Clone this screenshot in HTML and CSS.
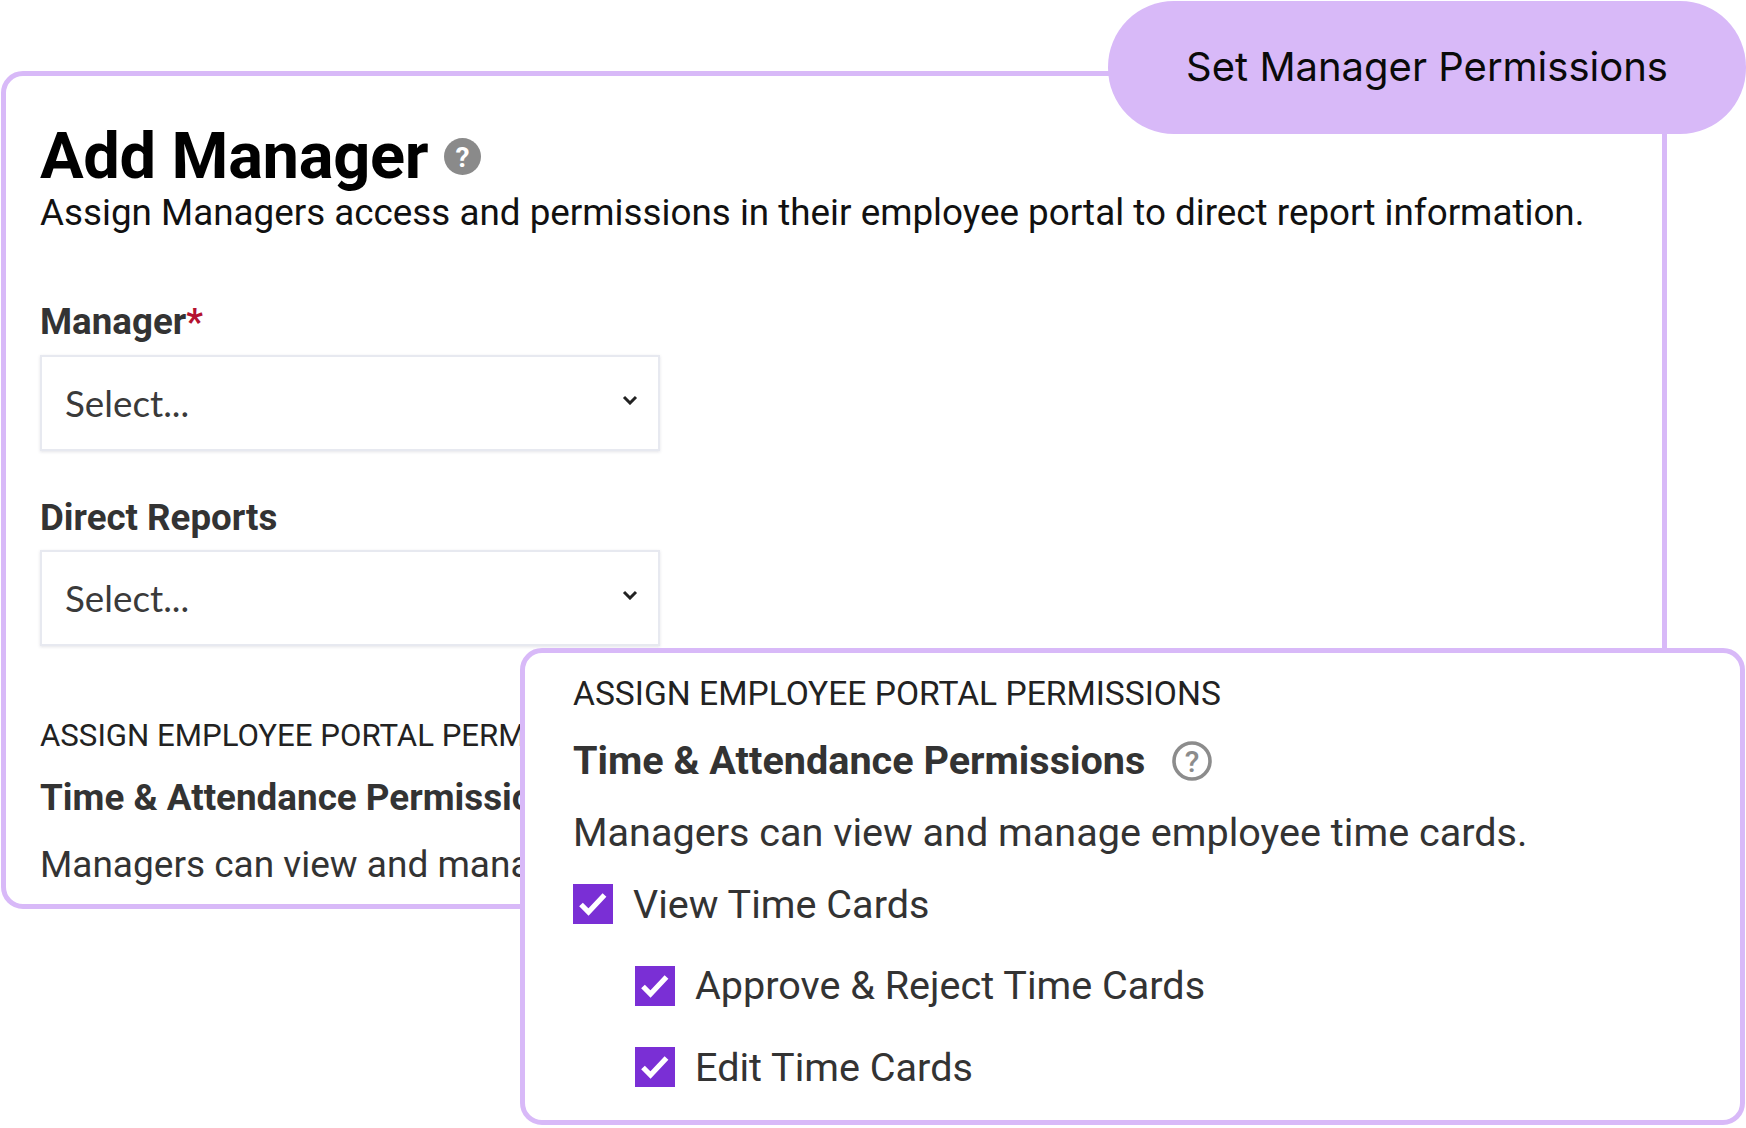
FILE: index.html
```html
<!DOCTYPE html>
<html lang="en">
<head>
<meta charset="utf-8">
<title>Add Manager</title>
<link rel="stylesheet" href="styles.css">
</head>
<body>
<main class="stage">
  <section class="card">
    <div class="title-row">
      <h1 class="title">Add Manager</h1>
      <svg class="help-solid" viewBox="0 0 38 38" aria-hidden="true"><circle cx="19" cy="19" r="19" fill="#8a8a8a"/><text x="19" y="30" text-anchor="middle" class="help-solid-mark">?</text></svg>
    </div>
    <p class="subtitle">Assign Managers access and permissions in their employee portal to direct report information.</p>
    <label class="field-label field-label-first">Manager<span class="req">*</span></label>
    <div class="select"><span>Select...</span>
      <svg class="chev" viewBox="0 0 16 10" aria-hidden="true"><path d="M2 2l6 6 6-6" fill="none" stroke="#222" stroke-width="3"/></svg>
    </div>
    <label class="field-label field-label-second">Direct Reports</label>
    <div class="select"><span>Select...</span>
      <svg class="chev" viewBox="0 0 16 10" aria-hidden="true"><path d="M2 2l6 6 6-6" fill="none" stroke="#222" stroke-width="3"/></svg>
    </div>
    <div class="back-clip">
      <div class="eyebrow eyebrow-back">ASSIGN EMPLOYEE PORTAL PERMISSIONS</div>
      <div class="perm-title perm-title-back">Time &amp; Attendance Permissions</div>
      <div class="perm-desc perm-desc-back">Managers can view and manage employee time cards.</div>
    </div>
  </section>

  <div class="pill">Set Manager Permissions</div>

  <section class="panel">
    <div class="eyebrow">ASSIGN EMPLOYEE PORTAL PERMISSIONS</div>
    <div class="perm-head">
      <div class="perm-title">Time &amp; Attendance Permissions</div>
      <svg class="help-line" viewBox="0 0 40 40" aria-hidden="true"><circle cx="20" cy="20" r="18" fill="none" stroke="#8c8c8c" stroke-width="3.6"/><text x="20" y="30.500" text-anchor="middle" class="help-line-mark">?</text></svg>
    </div>
    <div class="perm-desc">Managers can view and manage employee time cards.</div>
    <ul class="checks">
      <li class="check"><svg class="box" viewBox="0 0 40 40" aria-hidden="true"><rect width="40" height="40" fill="#7a2fd5"/><path d="M8 20.500L15.500 28 31.500 11" fill="none" stroke="#fff" stroke-width="5.2"/></svg><span>View Time Cards</span></li>
      <li class="check check-sub"><svg class="box" viewBox="0 0 40 40" aria-hidden="true"><rect width="40" height="40" fill="#7a2fd5"/><path d="M8 20.500L15.500 28 31.500 11" fill="none" stroke="#fff" stroke-width="5.2"/></svg><span>Approve &amp; Reject Time Cards</span></li>
      <li class="check check-sub"><svg class="box" viewBox="0 0 40 40" aria-hidden="true"><rect width="40" height="40" fill="#7a2fd5"/><path d="M8 20.500L15.500 28 31.500 11" fill="none" stroke="#fff" stroke-width="5.2"/></svg><span>Edit Time Cards</span></li>
    </ul>
  </section>
</main>
</body>
</html>
```
FILE: styles.css
```css
* { box-sizing: border-box; }
html, body { margin: 0; padding: 0; background: #fff; }
body { width: 1746px; height: 1128px; overflow: hidden; font-family: Roboto, "Liberation Sans", sans-serif; }
.stage { position: relative; width: 1746px; height: 1128px; padding: 71px 0 0 1px; }

.card {
  width: 1666px; height: 838px;
  border: 5px solid #d8b9f8; border-radius: 22px;
  padding: 46px 0 0 34px; background: #fff;
}
.title-row { display: flex; align-items: center; gap: 16px; height: 69px; }
.title { margin: 0; font-size: 65px; line-height: 69px; font-weight: 700; color: #000; letter-spacing: -0.35px; white-space: nowrap; }
.help-solid { width: 37px; height: 37px; margin-bottom: 1px; }
.help-solid-mark { font: 700 29px Roboto, sans-serif; fill: #fff; }
.subtitle { margin: 0; font-size: 36.8px; line-height: 44px; color: #111; white-space: nowrap; }

.field-label { display: block; font-size: 36.7px; line-height: 44px; font-weight: 700; color: #333; }
.field-label-first { margin-top: 65px; margin-bottom: 11px; }
.field-label-second { margin-top: 45px; margin-bottom: 10px; }
.req { color: #b5122f; }
.select {
  width: 620px; height: 96px;
  border: 2px solid #e7e9f0; background: #fff;
  box-shadow: 0 1px 3px rgba(60, 60, 90, 0.14);
  display: flex; align-items: center; justify-content: space-between;
  padding: 0 20px 0 23px;
  font-family: Lato, sans-serif; font-size: 36.8px; color: #3a3a3a;
}
.chev { width: 16px; height: 10px; margin-bottom: 6px; }

.eyebrow { font-size: 33.6px; line-height: 40px; color: #222; white-space: nowrap; }
.perm-title { font-size: 39.6px; line-height: 46px; font-weight: 700; color: #333; white-space: nowrap; }
.perm-desc { font-size: 39.6px; line-height: 46px; color: #333; white-space: nowrap; }

.back-clip { width: 485px; overflow: hidden; }
.eyebrow-back { margin-top: 70px; font-size: 31.2px; }
.perm-title-back { margin-top: 19px; font-size: 36.8px; }
.perm-desc-back { margin-top: 21px; font-size: 37px; }

.pill {
  position: absolute; left: 1108px; top: 1px; width: 638px; height: 133px;
  border-radius: 66px; background: #d8b9f8;
  display: flex; align-items: center; justify-content: center;
  padding-bottom: 2px;
  font-family: Inter, sans-serif; font-size: 40px; color: #0a0a0a;
}

.panel {
  position: absolute; left: 520px; top: 648px; width: 1225px; height: 477px;
  border: 5px solid #d8b9f8; border-radius: 22px; background: #fff;
  padding: 21px 0 0 48px;
}
.perm-head { display: flex; align-items: center; gap: 27px; margin-top: 24px; }
.help-line { width: 40px; height: 40px; }
.help-line-mark { font: 500 30px Roboto, sans-serif; fill: #8c8c8c; }
.panel .perm-desc { margin-top: 26px; }
.checks { list-style: none; margin: 28px 0 0; padding: 0; }
.check { display: flex; align-items: center; gap: 20px; height: 40px; margin-bottom: 41.5px; font-size: 39.6px; color: #333; white-space: nowrap; }
.check-sub { margin-left: 62px; }
.box { width: 40px; height: 40px; flex: none; }
```
